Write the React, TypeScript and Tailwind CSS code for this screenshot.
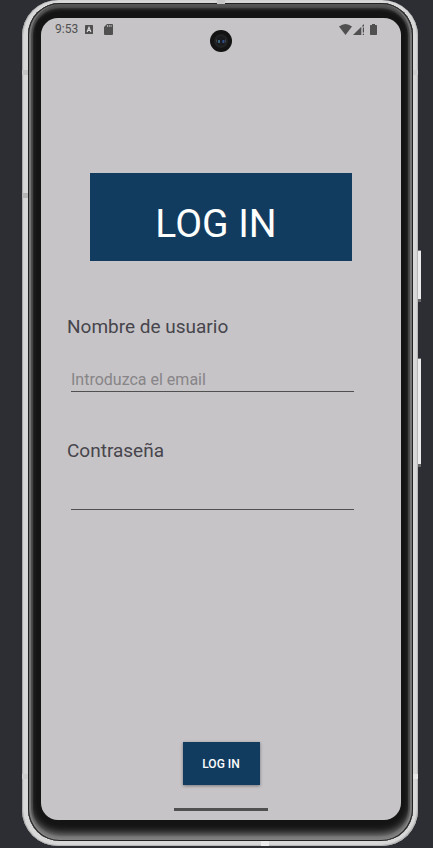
import React, { useState } from "react";

function StatusBar() {
  return (
    <div className="flex h-[22px] items-center justify-between pr-6 pl-[14px] text-[#505050]">
      <div className="flex items-center">
        <span className="text-[12px] leading-4">9:53</span>
        <svg className="ml-[7px]" width="8" height="9" viewBox="0 0 8 9" aria-hidden="true">
          <rect width="8" height="9" rx="0.6" fill="currentColor" />
          <path d="M2.1 7 L4 2.3 L5.9 7 M2.9 5.5 H5.1" fill="none" stroke="#dddbde" strokeWidth="1.1" />
        </svg>
        <svg className="ml-[11px]" width="9" height="11" viewBox="0 0 9 11" aria-hidden="true">
          <path d="M3 0 H8 Q9 0 9 1 V10 Q9 11 8 11 H1 Q0 11 0 10 V3 Z" fill="currentColor" />
          <path d="M3.5 1 V3 M5.3 1 V3 M7.1 1 V3" stroke="#c6c4c7" strokeWidth="0.8" />
        </svg>
      </div>
      <div className="flex items-center">
        <svg width="13" height="11" viewBox="0 0 13 11" aria-hidden="true">
          <path d="M0 2.6 Q6.5 -2.6 13 2.6 L6.5 11 Z" fill="currentColor" />
        </svg>
        <svg className="ml-px" width="12" height="11" viewBox="0 0 12 11" aria-hidden="true">
          <path d="M0 11 L8.3 2.7 V11 Z" fill="currentColor" />
          <path d="M9 2 L11 0 V2.6 H9 Z M9.8 3.6 H11 V8.6 H9.8 Z M9.8 9.8 H11 V11 H9.8 Z" fill="currentColor" />
        </svg>
        <svg className="ml-[5px]" width="7" height="11" viewBox="0 0 7 11" aria-hidden="true">
          <path d="M2 0 H5 V1 H6.4 Q7 1 7 1.7 V10.3 Q7 11 6.4 11 H0.6 Q0 11 0 10.3 V1.7 Q0 1 0.6 1 H2 Z" fill="currentColor" />
        </svg>
      </div>
    </div>
  );
}

function Camera() {
  return (
    <svg
      className="absolute top-3 left-1/2 -translate-x-1/2"
      width="22"
      height="22"
      viewBox="0 0 22 22"
      aria-hidden="true"
    >
      <circle cx="11" cy="11" r="11" fill="#131313" />
      <circle cx="11" cy="11" r="7" fill="#202122" />
      <circle cx="11" cy="11" r="4.6" fill="#191b1e" />
      <path d="M6.5 9.5 V12.5 M15.5 9.5 V12.5" stroke="#48494c" strokeWidth="0.8" />
      <rect x="8" y="10" width="2" height="3" fill="#3d6377" />
      <rect x="12.4" y="10" width="2" height="3" fill="#31508c" />
    </svg>
  );
}

const inputStyle =
  "h-7 w-full rounded-none border-b border-[#505050] bg-transparent pt-[3px] text-[16px] leading-6 text-[#333] outline-none placeholder:text-[#878588]";

function LoginForm() {
  const [email, setEmail] = useState("");
  const [password, setPassword] = useState("");

  return (
    <form className="flex grow flex-col" onSubmit={(e: React.FormEvent) => e.preventDefault()}>
      <h1 className="mx-[49px] mt-[133px] flex h-[88px] items-center justify-center bg-[#123c5f] pt-[14px] pr-[10px] text-[39px] leading-[48px] font-normal text-white">
        LOG IN
      </h1>

      <label htmlFor="email" className="mt-[54px] ml-[26px] text-[19px] leading-6 text-[#47454c]">
        Nombre de usuario
      </label>
      <div className="mt-[25px] mr-[47px] ml-[30px] flex">
        <input
          id="email"
          type="text"
          placeholder="Introduzca el email"
          value={email}
          onChange={(e) => setEmail(e.target.value)}
          className={inputStyle}
        />
      </div>

      <label htmlFor="password" className="mt-[47px] ml-[26px] text-[19px] leading-6 text-[#47454c]">
        Contraseña
      </label>
      <div className="mt-[19px] mr-[47px] ml-[30px] flex">
        <input
          id="password"
          type="password"
          value={password}
          onChange={(e) => setPassword(e.target.value)}
          className={inputStyle}
        />
      </div>

      <button
        type="submit"
        className="mt-auto h-[43px] min-w-[77px] self-center bg-[#123c5f] px-[19px] text-[12px] leading-4 font-medium text-white shadow-[0_1px_3px_rgba(0,0,0,0.4)]"
      >
        LOG IN
      </button>
    </form>
  );
}

export default function App() {
  return (
    <main className="flex min-h-screen flex-col bg-[#2c2e33] pr-[15px] pb-[2px] pl-[22px] font-['Roboto','Liberation_Sans',sans-serif]">
      {/* Metal frame */}
      <div className="relative flex grow flex-col rounded-[36px] bg-[#d8d8d8] pt-[3px] pr-[5px] pb-[5px] pl-[6px] shadow-[inset_1px_0_1px_#a8a8a8,inset_-1px_-1px_1px_#b4b4b4]">
        <span className="absolute top-[70px] left-0 h-[5px] w-[6px] bg-[#c4c4c4]" />
        <span className="absolute top-[193px] left-0 h-[5px] w-[6px] bg-[#b6b6b6]" />
        <span className="absolute bottom-[67px] left-0 h-[5px] w-[6px] bg-[#cecece]" />
        <span className="absolute top-[70px] right-0 h-[5px] w-[5px] bg-[#cecece]" />
        <span className="absolute right-0 bottom-[67px] h-[5px] w-[5px] bg-[#e6e6e6]" />
        <span className="absolute bottom-0 left-[239px] h-[5px] w-2 bg-[#ebebeb]" />

        {/* Side keys */}
        <span className="absolute top-[250px] -right-[3px] h-[52px] w-[3px] border-t border-b-3 border-t-[#777] border-b-[#666] bg-[#ececec]" />
        <span className="absolute top-[358px] -right-[3px] h-[109px] w-[3px] border-t border-b-3 border-t-[#777] border-b-[#666] bg-[#ececec]" />

        {/* Bezel */}
        <div className="flex grow flex-col rounded-[32px] bg-[#141414] pt-[15px] pr-3 pb-[21px] pl-[13px] shadow-[inset_0_0_0_1px_#222,inset_0_-7px_9px_#8a8a8a,inset_2px_0_0_1px_#6c6c6c,inset_-2px_0_0_1px_#6c6c6c,inset_0_4px_4px_1px_#585858,inset_0_0_1px_5px_#3a3a3a]">
          {/* Screen */}
          <div className="relative flex grow flex-col rounded-[17px] bg-[#c6c4c7] pb-[9px]">
            <StatusBar />
            <Camera />
            <LoginForm />
            <div className="mt-[23px] flex justify-center">
              <span className="h-[3px] w-[94px] bg-[#505050]" />
            </div>
          </div>
        </div>
        <span className="absolute top-0 left-[195px] h-1 w-2 bg-[#c6c6c6]" />
      </div>
    </main>
  );
}
